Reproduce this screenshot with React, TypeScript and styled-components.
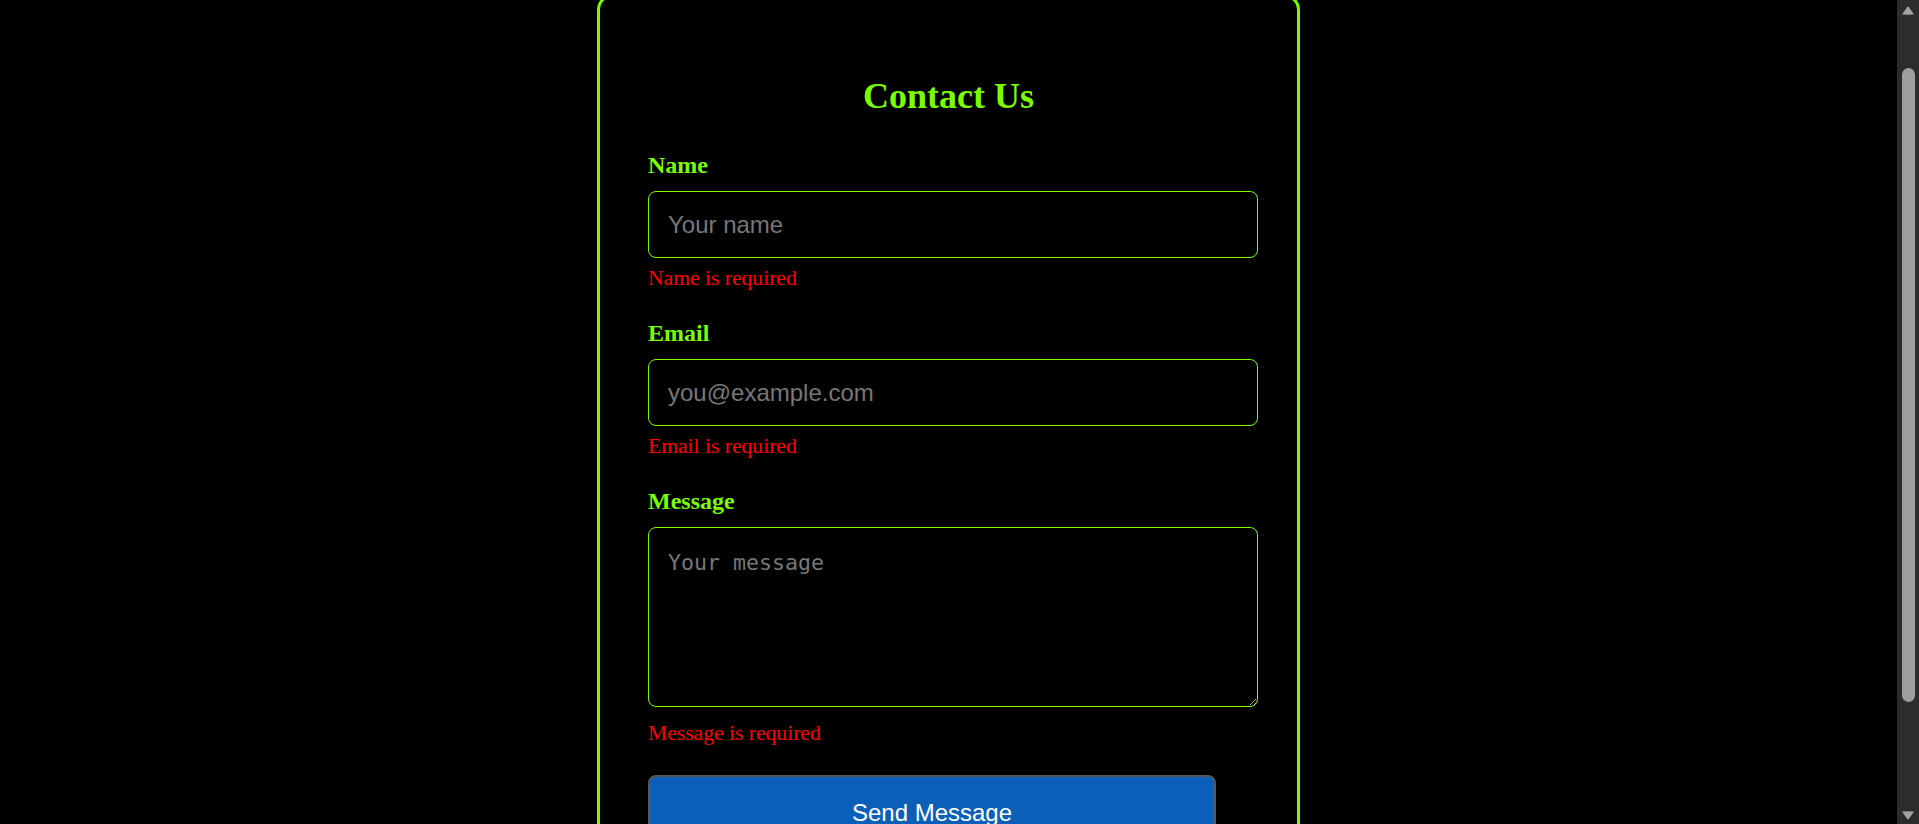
import React, { useLayoutEffect, useRef } from "react";
import styled, { createGlobalStyle } from "styled-components";

const GlobalStyle = createGlobalStyle`
  html, body {
    margin: 0;
    background: #000;
    height: 100%;
    overflow: hidden;
  }
  body {
    font-family: "Liberation Serif", "Times New Roman", serif;
  }
  #root {
    height: 100%;
  }
`;

const Shell = styled.div`
  display: flex;
  height: 100vh;
  background: #000;
`;

const ScrollView = styled.div`
  flex: 1;
  min-width: 0;
  overflow: hidden;
`;

const Page = styled.div`
  display: flex;
  justify-content: center;
  padding: 60px 0 59px;
`;

const Card = styled.div`
  box-sizing: border-box;
  width: 703px;
  border: 3px solid #7cfc00;
  border-radius: 16px;
  padding: 48px;
  background: #000;
`;

const Title = styled.h2`
  margin: 30px 0 35px;
  text-align: center;
  color: #7cfc00;
  font-family: "Liberation Serif", "Times New Roman", serif;
  font-weight: 700;
  font-size: 36px;
`;

const Form = styled.form`
  display: flex;
  flex-direction: column;
  gap: 29px;
`;

const Field = styled.div`
  display: flex;
  flex-direction: column;
  align-items: flex-start;
`;

const Label = styled.label`
  color: #7cfc00;
  font-family: "Liberation Serif", "Times New Roman", serif;
  font-weight: 700;
  font-size: 24px;
  margin-bottom: 12px;
`;

const Input = styled.input`
  box-sizing: border-box;
  width: 610px;
  height: 67px;
  padding: 0 19px;
  background: #000;
  color: #fff;
  border: 1px solid #7cfc00;
  border-radius: 8px;
  font-family: "Liberation Sans", Arial, sans-serif;
  font-size: 24px;
  outline: none;
  &::placeholder {
    color: #777;
  }
`;

const TextArea = styled.textarea`
  box-sizing: border-box;
  width: 610px;
  height: 180px;
  padding: 22px 19px;
  background: #000;
  color: #fff;
  border: 1px solid #7cfc00;
  border-radius: 8px;
  font-family: "DejaVu Sans Mono", "Liberation Mono", monospace;
  font-size: 21.6px;
  outline: none;
  color-scheme: dark;
  &::placeholder {
    color: #777;
  }
`;

const ErrorText = styled.div<{ $gap?: number }>`
  color: #ff0000;
  font-family: "Liberation Serif", "Times New Roman", serif;
  font-size: 21.6px;
  margin-top: ${(p) => p.$gap ?? 8}px;
`;

const SubmitButton = styled.button`
  box-sizing: border-box;
  width: 568px;
  padding: 22px 0;
  background: #0b5fb9;
  color: #fff;
  border: 2px solid #575757;
  border-radius: 8px;
  font-family: "Liberation Sans", Arial, sans-serif;
  font-size: 24px;
  cursor: pointer;
`;

/* drawn page scrollbar (dark scheme) */
const ScrollBar = styled.div`
  width: 22px;
  flex: 0 0 22px;
  display: flex;
  flex-direction: column;
  align-items: center;
  background: #2c2c2c;
`;

const ArrowBox = styled.div<{ $down?: boolean }>`
  height: 22px;
  flex: 0 0 22px;
  display: flex;
  align-items: center;
  justify-content: center;
  padding-top: ${(p) => (p.$down ? 3 : 0)}px;
  box-sizing: border-box;
`;

const Thumb = styled.div`
  width: 13px;
  height: 634px;
  margin-top: 46px;
  border-radius: 7px;
  background: #9f9f9f;
`;

const Spacer = styled.div`
  flex: 1;
`;

function Arrow({ down }: { down?: boolean }) {
  return (
    <ArrowBox $down={down}>
      <svg width="14" height="10" viewBox="0 0 14 10">
        {down ? (
          <path d="M1 1.5 Q7 1.2 13 1.5 L7.8 9 Q7 9.8 6.2 9 Z" fill="#a3a3a3" />
        ) : (
          <path d="M1 8.5 Q7 8.8 13 8.5 L7.8 1 Q7 0.2 6.2 1 Z" fill="#a3a3a3" />
        )}
      </svg>
    </ArrowBox>
  );
}

export default function App() {
  const viewRef = useRef<HTMLDivElement>(null);

  useLayoutEffect(() => {
    if (viewRef.current) viewRef.current.scrollTop = 66;
  }, []);

  return (
    <>
      <GlobalStyle />
      <Shell>
        <ScrollView ref={viewRef}>
          <Page>
            <Card>
              <Title>Contact Us</Title>
              <Form onSubmit={(e) => e.preventDefault()} noValidate>
                <Field>
                  <Label htmlFor="name">Name</Label>
                  <Input id="name" type="text" placeholder="Your name" />
                  <ErrorText>Name is required</ErrorText>
                </Field>
                <Field>
                  <Label htmlFor="email">Email</Label>
                  <Input id="email" type="email" placeholder="you@example.com" />
                  <ErrorText>Email is required</ErrorText>
                </Field>
                <Field>
                  <Label htmlFor="message">Message</Label>
                  <TextArea id="message" placeholder="Your message" />
                  <ErrorText $gap={13.5}>Message is required</ErrorText>
                </Field>
                <Field>
                  <SubmitButton type="submit">Send Message</SubmitButton>
                </Field>
              </Form>
            </Card>
          </Page>
        </ScrollView>
        <ScrollBar>
          <Arrow />
          <Thumb />
          <Spacer />
          <Arrow down />
        </ScrollBar>
      </Shell>
    </>
  );
}
